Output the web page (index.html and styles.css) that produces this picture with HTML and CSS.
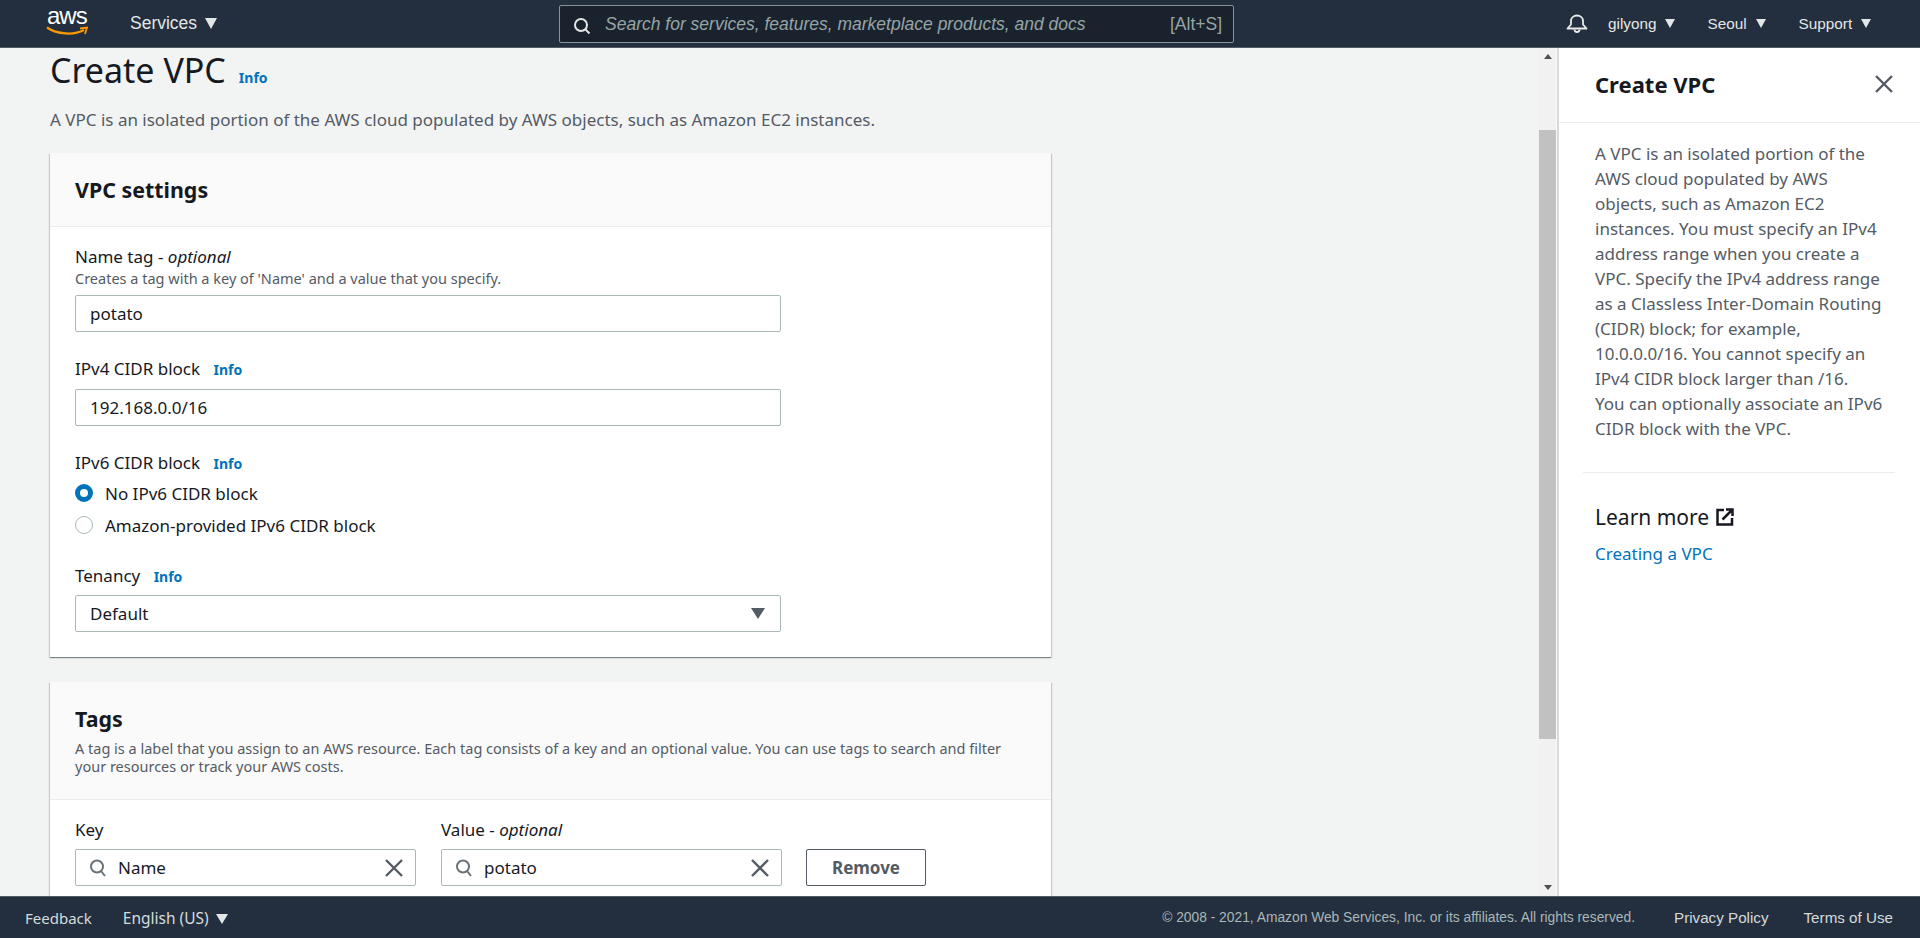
FILE: index.html
```html
<!DOCTYPE html>
<html lang="en">
<head>
<meta charset="utf-8">
<title>Create VPC</title>
<link rel="stylesheet" href="styles.css">
</head>
<body>
<header class="topbar">
  <a class="logo"><span class="logo-text">aws</span>
    <svg class="logo-smile" width="42" height="10" viewBox="0 0 42 10"><path d="M1 1.500C11 8.500 28 9.500 38 4" fill="none" stroke="#f90" stroke-width="2.200"/><path d="M34 2.500L41 1.500L39 8" fill="none" stroke="#f90" stroke-width="1.800"/></svg>
  </a>
  <div class="nav-item services">Services <span class="caret"></span></div>
  <div class="search">
    <svg class="search-icon" width="18" height="18" viewBox="0 0 18 18"><circle cx="8" cy="8" r="6" fill="none" stroke="#e3e6e6" stroke-width="2"/><path d="M12 12l4.500 4.500" stroke="#e3e6e6" stroke-width="2"/></svg>
    <span class="search-text">Search for services, features, marketplace products, and docs</span>
    <span class="search-key">[Alt+S]</span>
  </div>
  <div class="top-right">
    <svg class="bell" width="22" height="22" viewBox="0 0 22 22"><path d="M1.500 15.500L5 11.500V8C5 4.800 7.500 2.500 11 2.500S17 4.800 17 8V11.500L20.500 15.500Z" fill="none" stroke="#e8eaea" stroke-width="1.800" stroke-linejoin="round"/><path d="M8.500 16.500A2.500 2.500 0 1 0 13.500 16.500" fill="none" stroke="#e8eaea" stroke-width="1.800"/></svg>
    <div class="nav-item user">gilyong <span class="caret"></span></div>
    <div class="nav-item region">Seoul <span class="caret"></span></div>
    <div class="nav-item support">Support <span class="caret"></span></div>
  </div>
</header>

<div class="workspace">
  <main class="content">
    <div class="page-head">
      <h1>Create VPC</h1><a class="info info-title">Info</a>
    </div>
    <p class="page-desc">A VPC is an isolated portion of the AWS cloud populated by AWS objects, such as Amazon EC2 instances.</p>

    <section class="card">
      <div class="card-head"><h2>VPC settings</h2></div>
      <div class="card-body">
        <div class="field field-name">
          <div class="label">Name tag - <i>optional</i></div>
          <div class="hint">Creates a tag with a key of 'Name' and a value that you specify.</div>
          <div class="input">potato</div>
        </div>
        <div class="field field-cidr">
          <div class="label">IPv4 CIDR block <a class="info">Info</a></div>
          <div class="input">192.168.0.0/16</div>
        </div>
        <div class="field field-v6">
          <div class="label">IPv6 CIDR block <a class="info">Info</a></div>
          <div class="radio-row"><span class="radio on"></span>No IPv6 CIDR block</div>
          <div class="radio-row"><span class="radio"></span>Amazon-provided IPv6 CIDR block</div>
        </div>
        <div class="field field-ten">
          <div class="label">Tenancy <a class="info">Info</a></div>
          <div class="input select">Default<span class="caret dark"></span></div>
        </div>
      </div>
    </section>

    <section class="card tags">
      <div class="card-head tags-head">
        <h2>Tags</h2>
        <p class="tags-desc">A tag is a label that you assign to an AWS resource. Each tag consists of a key and an optional value. You can use tags to search and filter your resources or track your AWS costs.</p>
      </div>
      <div class="tag-row">
        <div class="tag-col">
          <div class="label">Key</div>
          <div class="input tag-input">
            <svg class="i-search" width="18" height="18" viewBox="0 0 18 18"><circle cx="8" cy="7.500" r="6" fill="none" stroke="#687078" stroke-width="2"/><path d="M12 12l4 5" stroke="#687078" stroke-width="2"/></svg>
            <span>Name</span>
            <svg class="i-x" width="18" height="18" viewBox="0 0 18 18"><path d="M1 1l16 16M17 1L1 17" stroke="#545b64" stroke-width="2.400"/></svg>
          </div>
        </div>
        <div class="tag-col">
          <div class="label">Value - <i>optional</i></div>
          <div class="input tag-input">
            <svg class="i-search" width="18" height="18" viewBox="0 0 18 18"><circle cx="8" cy="7.500" r="6" fill="none" stroke="#687078" stroke-width="2"/><path d="M12 12l4 5" stroke="#687078" stroke-width="2"/></svg>
            <span>potato</span>
            <svg class="i-x" width="18" height="18" viewBox="0 0 18 18"><path d="M1 1l16 16M17 1L1 17" stroke="#545b64" stroke-width="2.400"/></svg>
          </div>
        </div>
        <button class="remove">Remove</button>
      </div>
    </section>
  </main>

  <div class="scrollbar">
    <div class="sb-btn"><span class="sb-up"></span></div>
    <div class="sb-track"><div class="sb-thumb"></div></div>
    <div class="sb-btn"><span class="sb-down"></span></div>
  </div>

  <aside class="drawer">
    <div class="drawer-head">
      <h3>Create VPC</h3>
      <svg width="18" height="18" viewBox="0 0 18 18"><path d="M1 1l16 16M17 1L1 17" stroke="#545b64" stroke-width="2.400"/></svg>
    </div>
    <div class="drawer-body">
      <p>A VPC is an isolated portion of the AWS cloud populated by AWS objects, such as Amazon EC2 instances. You must specify an IPv4 address range when you create a VPC. Specify the IPv4 address range as a Classless Inter-Domain Routing (CIDR) block; for example, 10.0.0.0/16. You cannot specify an IPv4 CIDR block larger than /16.<br>You can optionally associate an IPv6 CIDR block with the VPC.</p>
    </div>
    <div class="drawer-more">
      <h4>Learn more
        <svg width="18" height="18" viewBox="0 0 18 18"><path d="M8 2H1.500V16.500H16V10" fill="none" stroke="#16191f" stroke-width="2.500"/><path d="M6.500 11.500L15 3M10 1.500H16.500V8" fill="none" stroke="#16191f" stroke-width="2.500"/></svg>
      </h4>
      <a class="more-link">Creating a VPC</a>
    </div>
  </aside>
</div>

<footer class="footer">
  <span class="f-link feedback">Feedback</span>
  <span class="f-link lang">English (US) <span class="caret"></span></span>
  <span class="copy">© 2008 - 2021, Amazon Web Services, Inc. or its affiliates. All rights reserved.</span>
  <span class="f-link privacy">Privacy Policy</span>
  <span class="f-link terms">Terms of Use</span>
</footer>
</body>
</html>
```
FILE: styles.css
```css
* { box-sizing: border-box; }
html, body { margin: 0; height: 100%; }
body {
  display: flex;
  flex-direction: column;
  height: 100vh;
  overflow: hidden;
  font-family: "Noto Sans", sans-serif;
  font-size: 14px;
  color: #16191f;
  background: #f2f3f3;
}
.topbar {
  flex: none;
  height: 48px;
  display: flex;
  align-items: center;
  background: #232f3e;
  border-bottom: 1px solid #545b64;
  font-family: "Liberation Sans", sans-serif;
  color: #e3e6e6;
  padding-left: 38px;
}
.logo { position: relative; width: 92px; height: 47px; display: block; }
.logo-text { position: absolute; left: 9px; top: 1px; font: 24px/30px "Liberation Sans", sans-serif; color: #fff; letter-spacing: -1px; }
.logo-smile { position: absolute; left: 8px; top: 26px; }
.nav-item { display: flex; align-items: center; white-space: nowrap; }
.services { font-size: 17.500px; gap: 8px; width: 429px; }
.caret {
  display: inline-block;
  width: 0; height: 0;
  border-left: 6.500px solid transparent;
  border-right: 6.500px solid transparent;
  border-top: 11px solid #e3e6e6;
}
.search {
  width: 675px;
  height: 38px;
  margin-top: 1px;
  display: flex;
  align-items: center;
  background: #1a222d;
  border: 1px solid #879596;
  border-radius: 2px;
  padding: 0 11px 0 13px;
}
.search-icon { margin: 3px 14px 0 0; }
.search-text { flex: 1; font-style: italic; font-size: 17.500px; color: #95a5a6; white-space: nowrap; }
.search-key { font-size: 17.500px; color: #95a5a6; }
.top-right { display: flex; align-items: center; padding-left: 332px; font-size: 15.300px; }
.bell { margin-right: 20px; }
.top-right .nav-item { gap: 9px; }
.user { margin-right: 32px; }
.region { margin-right: 33px; }
.top-right .caret { border-left-width: 5.500px; border-right-width: 5.500px; border-top-width: 9px; }

.workspace { flex: 1; min-height: 0; display: flex; }
.content { flex: 1; min-width: 0; overflow: hidden; padding-left: 50px; }
.page-head { height: 45px; display: flex; align-items: flex-end; }
h1 { margin: 0; font-size: 34px; line-height: 45px; font-weight: 400; color: #16191f; }
.info { font-size: 14px; font-weight: 700; color: #0073bb; margin-left: 9px; }
.info-title { margin-left: 13px; line-height: 30px; }
.page-desc { margin: 14px 0 0; font-size: 17px; line-height: 26px; color: #545b64; }
.card {
  width: 1001px;
  margin-top: 20px;
  background: #fff;
  box-shadow: 0 1px 1px 0 rgba(0,28,36,.3), 1px 1px 1px 0 rgba(0,28,36,.15), -1px 1px 1px 0 rgba(0,28,36,.15);
}
.card-head { height: 74px; padding: 22px 25px 0; background: #fafafa; border-bottom: 1px solid #eaeded; }
h2 { margin: 0; font-size: 21.400px; line-height: 30px; font-weight: 700; }
.card-body { padding: 19px 25px 24px; height: 430px; }
.label { font-size: 17px; line-height: 22px; color: #16191f; }
.hint { font-size: 14.500px; line-height: 17px; margin-top: 2px; color: #545b64; }
.input {
  display: flex;
  align-items: center;
  width: 706px;
  height: 37px;
  padding: 0 14px;
  margin-top: 8px;
  font-size: 17px;
  background: #fff;
  border: 1px solid #aab7b8;
  border-radius: 2px;
}
.field-cidr { margin-top: 26px; }
.field-v6 { margin-top: 26px; }
.field-ten { margin-top: 24px; }
.field-ten .input { margin-top: 7px; }
.radio-row { display: flex; align-items: center; height: 32px; font-size: 17px; }
.label + .radio-row { margin-top: 2px; }
.radio {
  width: 18px; height: 18px;
  margin-right: 12px;
  border: 1px solid #aab7b8;
  border-radius: 50%;
  background: #fff;
}
.radio.on { border: 5px solid #0073bb; }
.select { justify-content: space-between; padding-right: 15px; }
.caret.dark { border-top-color: #545b64; border-left-width: 7px; border-right-width: 7px; }
.tags { margin-top: 25px; height: 300px; }
.tags-head { height: 118px; padding-top: 22px; }
.tags-desc { margin: 5px 0 0; font-size: 14.500px; line-height: 18px; color: #545b64; width: 950px; }
.tag-row { display: flex; align-items: flex-end; padding: 19px 25px 0; gap: 25px; }
.tag-col { width: 341px; }
.tag-input { width: 341px; padding: 0 12px 0 13px; margin-top: 8px; }
.tag-input span { flex: 1; margin-left: 11px; }
.remove {
  width: 120px;
  height: 37px;
  margin-left: -1px;
  font: 700 17px "Noto Sans", sans-serif;
  color: #545b64;
  background: #fff;
  border: 1px solid #545b64;
  border-radius: 2px;
}
.scrollbar { flex: none; width: 18px; display: flex; flex-direction: column; background: #f1f1f1; border-right: 1px solid #f8f8f8; }
.sb-btn { flex: none; height: 17px; display: flex; align-items: center; justify-content: center; }
.sb-up, .sb-down { width: 0; height: 0; border-left: 4.500px solid transparent; border-right: 4.500px solid transparent; }
.sb-up { border-bottom: 5px solid #505050; }
.sb-down { border-top: 5px solid #505050; }
.sb-track { flex: 1; padding-top: 65px; }
.sb-thumb { height: 609px; background: #c1c1c1; }
.drawer { flex: none; width: 363px; background: #fff; border-left: 2px solid #d5dbdb; }
.drawer-head {
  height: 75px;
  display: flex;
  align-items: center;
  justify-content: space-between;
  padding: 0 27px 3px 36px;
  border-bottom: 1px solid #eaeded;
}
h3 { margin: 0; font-size: 22px; font-weight: 700; line-height: 30px; }
.drawer-body { margin: 0 25px 0 24px; padding: 18px 6px 31px 12px; border-bottom: 1px solid #eaeded; }
.drawer-body p { margin: 0; font-size: 17px; line-height: 25px; color: #545b64; }
.drawer-more { padding: 29px 36px 0; }
h4 { margin: 0; font-size: 21px; line-height: 30px; font-weight: 400; display: flex; align-items: center; gap: 7px; }
.more-link { display: block; margin-top: 9px; font-size: 17px; line-height: 25px; color: #0073bb; }
.footer {
  flex: none;
  height: 42px;
  display: flex;
  align-items: center;
  padding: 0 27px 0 25px;
  background: #232f3e;
  border-top: 1px solid #545b64;
  font-size: 15px;
  color: #d5dbdb;
}
.f-link { white-space: nowrap; }
.lang { margin-left: 31px; flex: 1; font-size: 15.500px; }
.lang .caret { border-left-width: 6px; border-right-width: 6px; border-top-width: 10px; margin-left: 3px; }
.copy { font-family: "Liberation Sans", sans-serif; font-size: 13.800px; color: #aab7b8; margin-right: 39px; }
.privacy { margin-right: 35px; font-family: "Liberation Sans", sans-serif; font-size: 15.200px; }
.terms { font-family: "Liberation Sans", sans-serif; font-size: 15.200px; }
```
